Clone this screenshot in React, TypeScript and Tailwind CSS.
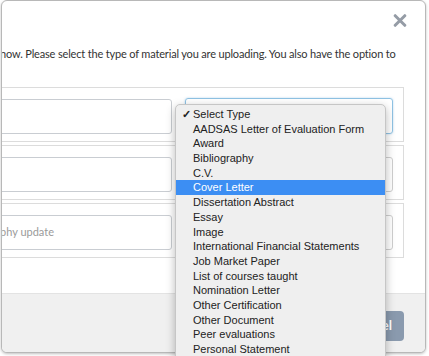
import React from "react";

const items = [
  "Select Type",
  "AADSAS Letter of Evaluation Form",
  "Award",
  "Bibliography",
  "C.V.",
  "Cover Letter",
  "Dissertation Abstract",
  "Essay",
  "Image",
  "International Financial Statements",
  "Job Market Paper",
  "List of courses taught",
  "Nomination Letter",
  "Other Certification",
  "Other Document",
  "Peer evaluations",
  "Personal Statement",
];

function Row({ placeholder, focused }: { placeholder?: string; focused?: boolean }) {
  return (
    <div className="h-[55px] border border-[#dcdcdc] flex items-start pt-[11px] pr-[10px]">
      <div className="ml-[9px] w-[192px] h-[35px] border border-[#c9cdd2] rounded-[3px] flex items-center pl-[19px] text-[11px] text-[#9a9a9a] whitespace-nowrap overflow-hidden">
        {placeholder}
      </div>
      <div
        className={
          focused
            ? "ml-[13px] w-[208px] h-[36px] -mt-[1px] border border-[#8fc2e3] rounded-[3px] shadow-[0_0_2px_rgba(100,170,220,0.5)]"
            : "ml-[13px] w-[208px] h-[35px] border border-[#cfcfcf] rounded-[3px]"
        }
      />
    </div>
  );
}

export default function App() {
  return (
    <div
      className="relative w-[429px] h-[356px] overflow-hidden bg-white"
      style={{ fontFamily: "Lato, 'Open Sans', sans-serif" }}
    >
      <div className="ml-[1px] w-[425px] h-[353px] border border-[#b8b8b8] rounded-[6px] overflow-hidden bg-white flex flex-col shadow-[0_1px_3px_rgba(0,0,0,0.25)]">
        <div className="h-[45px] flex justify-end items-start pt-[13px] pr-[18px] shrink-0">
          <svg width="14" height="13" viewBox="0 0 14 13">
            <path d="M2.2 1.7 L11.8 11.3 M11.8 1.7 L2.2 11.3" stroke="#959ca6" strokeWidth="3" strokeLinecap="round" />
          </svg>
        </div>
        <div className="h-[16px] leading-[16px] text-[11px] tracking-[-0.17px] text-[#333] whitespace-nowrap -ml-[2px] shrink-0">
          now. Please select the type of material you are uploading. You also have the option to
        </div>
        <div className="mt-[25px] -ml-[32px] w-[434px] flex flex-col gap-[3px] shrink-0">
          <Row focused />
          <Row />
          <Row placeholder="phy update" />
        </div>
        <div className="mt-auto h-[59px] bg-[#f0f0f0] border-t border-[#e3e3e3] flex justify-end items-start pt-[17px] pr-[21px] shrink-0">
          <div className="h-[30px] px-[12px] bg-[#8a9aae] rounded-[4px] text-white text-[13px] font-bold flex items-center">
            Cancel
          </div>
        </div>
      </div>

      <div
        className="absolute left-[175px] top-[104px] w-[211px] h-[300px] bg-[#efefef] border border-[#c6c6c6] rounded-[5px] shadow-[0_3px_10px_rgba(0,0,0,0.28)] pt-[2px]"
        style={{ fontFamily: "'Liberation Sans', Arial, sans-serif" }}
      >
        {items.map((it, i) => (
          <div
            key={it}
            className={
              i === 5
                ? "relative h-[14.7px] leading-[14.7px] text-[11px] pl-[17px] bg-[#3c8ef3] text-white whitespace-nowrap"
                : "relative h-[14.7px] leading-[14.7px] text-[11px] pl-[17px] text-[#222] whitespace-nowrap"
            }
          >
            {i === 0 && <span className="absolute left-[6px] top-0 font-bold">✓</span>}
            {it}
          </div>
        ))}
      </div>
    </div>
  );
}
